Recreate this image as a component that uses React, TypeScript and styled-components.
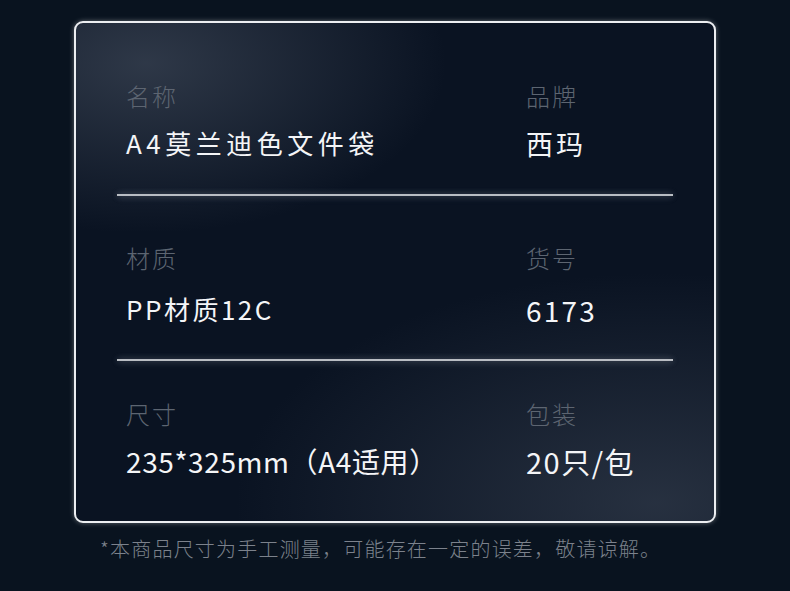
import React from "react";
import styled, { createGlobalStyle } from "styled-components";

const Global = createGlobalStyle`
  html, body { margin: 0; padding: 0; background: #09131f; }
  body { font-family: "Noto Sans CJK SC", "Noto Sans", sans-serif; }
`;

const Page = styled.div`
  width: 790px;
  height: 591px;
  box-sizing: border-box;
  padding: 21px 0 0 74px;
  background: #09131f;
  overflow: hidden;
`;

const Card = styled.div`
  width: 642px;
  height: 502px;
  box-sizing: border-box;
  border: 2px solid #eceef1;
  border-radius: 9px;
  box-shadow: 0 0 5px rgba(255, 255, 255, 0.35);
  background:
    radial-gradient(ellipse 300px 170px at 70px 40px, rgba(66, 76, 92, 0.65), rgba(66, 76, 92, 0) 100%),
    radial-gradient(ellipse 420px 230px at 580px 480px, rgba(58, 68, 84, 0.6), rgba(58, 68, 84, 0) 100%),
    #0a1322;
  padding: 0 41px;
  display: flex;
  flex-direction: column;
`;

const Row = styled.div<{ $top: number; $bottom: number }>`
  display: grid;
  grid-template-columns: 400px 1fr;
  padding: ${(p) => p.$top}px 0 ${(p) => p.$bottom}px 9px;
`;

const Field = styled.div`
  display: flex;
  flex-direction: column;
`;

const Label = styled.div`
  font-size: 24px;
  line-height: 24px;
  font-weight: 300;
  color: #5d6571;
  letter-spacing: 2px;
  white-space: nowrap;
`;

const Value = styled.div<{ $size: number; $ls: number; $gap: number }>`
  margin-top: ${(p) => p.$gap}px;
  font-size: ${(p) => p.$size}px;
  line-height: ${(p) => p.$size}px;
  letter-spacing: ${(p) => p.$ls}px;
  font-weight: 400;
  color: #f4f5f7;
  white-space: nowrap;
`;

const Divider = styled.div`
  height: 2px;
  background: #b9bdc3;
  box-shadow: 0 0 6px rgba(220, 225, 235, 0.35), 0 1px 8px rgba(200, 210, 225, 0.15);
`;

const Note = styled.div`
  margin: 16px 0 0 26px;
  font-size: 20px;
  line-height: 20px;
  font-weight: 300;
  color: #7c828c;
  letter-spacing: 1.2px;
  white-space: nowrap;
`;

type F = { label: string; value: string; size: number; ls: number };

const rows: { top: number; bottom: number; gap: number; fields: F[] }[] = [
  {
    top: 61,
    bottom: 37,
    gap: 22,
    fields: [
      { label: "名称", value: "A4莫兰迪色文件袋", size: 26, ls: 4.5 },
      { label: "品牌", value: "西玛", size: 27, ls: 3 },
    ],
  },
  {
    top: 50,
    bottom: 35,
    gap: 26,
    fields: [
      { label: "材质", value: "PP材质12C", size: 26, ls: 2.5 },
      { label: "货号", value: "6173", size: 28, ls: 2.2 },
    ],
  },
  {
    top: 41,
    bottom: 0,
    gap: 21,
    fields: [
      { label: "尺寸", value: "235*325mm（A4适用）", size: 28, ls: 0.6 },
      { label: "包装", value: "20只/包", size: 29, ls: 1.5 },
    ],
  },
];

export default function App() {
  return (
    <>
      <Global />
      <Page>
        <Card>
          {rows.map((r, i) => (
            <React.Fragment key={i}>
              <Row $top={r.top} $bottom={r.bottom}>
                {r.fields.map((f) => (
                  <Field key={f.label}>
                    <Label>{f.label}</Label>
                    <Value $size={f.size} $ls={f.ls} $gap={r.gap}>
                      {f.value}
                    </Value>
                  </Field>
                ))}
              </Row>
              {i < rows.length - 1 && <Divider />}
            </React.Fragment>
          ))}
        </Card>
        <Note>*本商品尺寸为手工测量，可能存在一定的误差，敬请谅解。</Note>
      </Page>
    </>
  );
}
